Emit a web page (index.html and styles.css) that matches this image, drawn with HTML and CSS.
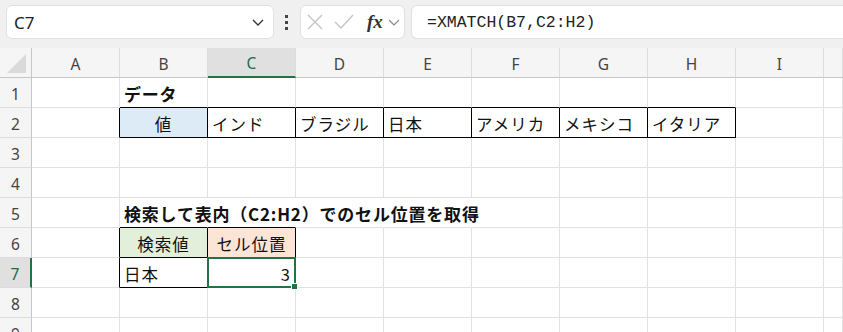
FILE: index.html
```html
<!DOCTYPE html>
<html lang="ja">
<head>
    <meta charset="UTF-8">
    <title>XMATCH</title>
    <link rel="stylesheet" href="styles.css">
</head>
<body>
    <!-- Name box + formula bar -->
    <div class="toolbar">
        <div class="namebox">
            <span>C7</span>
            <svg class="chev" width="14" height="10" viewBox="0 0 14 10"><path d="M2 3 L7 8 L12 3" fill="none" stroke="#333" stroke-width="1.3"/></svg>
        </div>
        <div class="dots"><i></i><i></i><i></i></div>
        <div class="fx-tools">
            <svg width="16" height="16" viewBox="0 0 16 16"><path d="M1 1 L15 15 M15 1 L1 15" stroke="#c4c4c4" stroke-width="1.4"/></svg>
            <svg width="20" height="16" viewBox="0 0 20 16"><path d="M1 8 L7 14 L19 1" fill="none" stroke="#c4c4c4" stroke-width="1.4"/></svg>
            <span class="fx">fx</span>
            <svg width="12" height="10" viewBox="0 0 12 10"><path d="M1 3 L6 8 L11 3" fill="none" stroke="#8a8a8a" stroke-width="1.2"/></svg>
        </div>
        <div class="formula">=XMATCH(B7,C2:H2)</div>
    </div>

    <!-- Worksheet -->
    <div class="sheet" id="sheet"></div>

    <script>
        const sheet = document.getElementById('sheet');
        const letters = ['A', 'B', 'C', 'D', 'E', 'F', 'G', 'H', 'I', ''];

        // cell contents: row -> col -> {t, cls}
        const data = {
            1: { 2: { t: 'データ', cls: 'bold' } },
            2: {
                2: { t: '値', cls: 'center blue' },
                3: { t: 'インド' }, 4: { t: 'ブラジル' }, 5: { t: '日本' },
                6: { t: 'アメリカ' }, 7: { t: 'メキシコ' }, 8: { t: 'イタリア' }
            },
            5: { 2: { t: '検索して表内（C2:H2）でのセル位置を取得', cls: 'bold' } },
            6: {
                2: { t: '検索値', cls: 'center green' },
                3: { t: 'セル位置', cls: 'center orange' }
            },
            7: { 2: { t: '日本' }, 3: { t: '3', cls: 'right active' } }
        };

        // ranges with thin black borders
        function boxed(r, c) {
            if (r === 2 && c >= 2 && c <= 8) return true;
            if (r >= 6 && r <= 7 && c >= 2 && c <= 3) return true;
            return false;
        }

        // corner + column headers
        const corner = document.createElement('div');
        corner.className = 'hd corner';
        corner.innerHTML = '<span class="tri"></span>';
        sheet.appendChild(corner);
        letters.forEach(l => {
            const h = document.createElement('div');
            h.className = 'hd col' + (l === 'C' ? ' sel' : '');
            h.textContent = l;
            sheet.appendChild(h);
        });

        for (let r = 1; r <= 9; r++) {
            const rh = document.createElement('div');
            rh.className = 'hd row' + (r === 7 ? ' sel' : '');
            rh.textContent = r;
            sheet.appendChild(rh);

            for (let c = 1; c <= 10; c++) {
                const cell = document.createElement('div');
                const info = (data[r] && data[r][c]) || null;
                cell.className = 'cell' + (info && info.cls ? ' ' + info.cls : '');
                if (info) cell.textContent = info.t;
                if (boxed(r, c) || boxed(r, c + 1)) cell.classList.add('br');
                if (boxed(r, c) || boxed(r + 1, c)) cell.classList.add('bb');
                // text of B5 spills over C5:E5
                if (r === 5 && c >= 2 && c <= 5) cell.classList.add('spill');
                if (info && info.cls && info.cls.includes('active')) {
                    cell.innerHTML += '<span class="frame"><span class="handle"></span></span>';
                }
                sheet.appendChild(cell);
            }
        }
    </script>
</body>
</html>
```

FILE: styles.css
```css
body {
    margin: 0;
    width: 843px;
    height: 332px;
    overflow: hidden;
    background: #fff;
    font-family: 'Noto Sans', 'Noto Sans CJK JP', sans-serif;
}

/* Formula bar */
.toolbar {
    height: 48px;
    box-sizing: border-box;
    padding: 5px 0 9px 6px;
    background: #f0f0f0;
    display: flex;
}

.namebox,
.fx-tools,
.formula {
    background: #fff;
    border: 1px solid #e1e1e1;
    border-radius: 6px;
    box-sizing: border-box;
    display: flex;
    align-items: center;
}

.namebox {
    width: 268px;
    padding: 0 8px 0 7px;
    justify-content: space-between;
    font-size: 17px;
    color: #222;
}

.dots {
    width: 16px;
    margin-left: 4px;
    display: flex;
    flex-direction: column;
    align-items: center;
    justify-content: center;
    gap: 3px;
}

.dots i {
    width: 3px;
    height: 3px;
    background: #444;
}

.fx-tools {
    width: 105px;
    margin-left: 6px;
    padding: 0 4px 0 6px;
    gap: 11px;
}

.fx {
    font-family: 'Liberation Serif', serif;
    font-style: italic;
    font-weight: bold;
    font-size: 19px;
    color: #333;
    margin: 0 -6px 0 2px;
}

.formula {
    flex: 1;
    margin-left: 6px;
    padding-left: 15px;
    border-right: none;
    border-radius: 6px 0 0 6px;
    font-family: 'Liberation Mono', monospace;
    font-size: 16.5px;
    color: #222;
}

/* Worksheet grid */
.sheet {
    display: grid;
    grid-template-columns: 32px repeat(9, 88px) 1fr;
    grid-auto-rows: 30px;
}

.hd {
    background: #f5f5f5;
    box-sizing: border-box;
    display: flex;
    align-items: center;
    justify-content: center;
    font-size: 15.5px;
    color: #444;
}

.hd.col {
    border-right: 1px solid #dcdcdc;
    border-bottom: 1px solid #c6c6c6;
    padding-top: 2px;
}

.hd.row {
    border-right: 1px solid #c6c6c6;
    border-bottom: 1px solid #dcdcdc;
    padding-top: 2px;
}

.hd.corner {
    border-right: 1px solid #c6c6c6;
    border-bottom: 1px solid #c6c6c6;
    position: relative;
}

.tri {
    position: absolute;
    right: 5px;
    bottom: 4px;
    width: 19px;
    height: 19px;
    background: #dadada;
    clip-path: polygon(100% 0, 100% 100%, 0 100%);
}

.hd.col.sel {
    background: #e0e0e0;
    border-bottom: 2px solid #217346;
    color: #1f6b45;
}

.hd.row.sel {
    background: #e0e0e0;
    border-right: 2px solid #217346;
    color: #1f6b45;
}

.cell {
    box-sizing: border-box;
    border-right: 1px solid #e1e1e1;
    border-bottom: 1px solid #e1e1e1;
    padding: 2px 4px 0;
    display: flex;
    align-items: center;
    white-space: nowrap;
    font-family: 'Noto Sans CJK JP', sans-serif;
    font-size: 16.5px;
    letter-spacing: 1px;
    color: #111;
    position: relative;
}

.cell.bold {
    font-weight: bold;
    font-size: 17px;
    letter-spacing: 0.8px;
}

.cell.center { justify-content: center; }
.cell.right { justify-content: flex-end; }

.cell.blue { background: #ddebf7; }
.cell.green { background: #e2efda; }
.cell.orange { background: #fce4d6; }

.cell.spill { border-right-color: transparent; }
.cell.br { border-right-color: #000; }
.cell.bb { border-bottom-color: #000; }

.frame {
    position: absolute;
    z-index: 2;
    top: -1px;
    left: -1px;
    right: -1px;
    bottom: -1px;
    border: 2px solid #217346;
}

.handle {
    position: absolute;
    right: -4px;
    bottom: -4px;
    width: 5px;
    height: 5px;
    background: #217346;
    border: 1px solid #fff;
}
```
